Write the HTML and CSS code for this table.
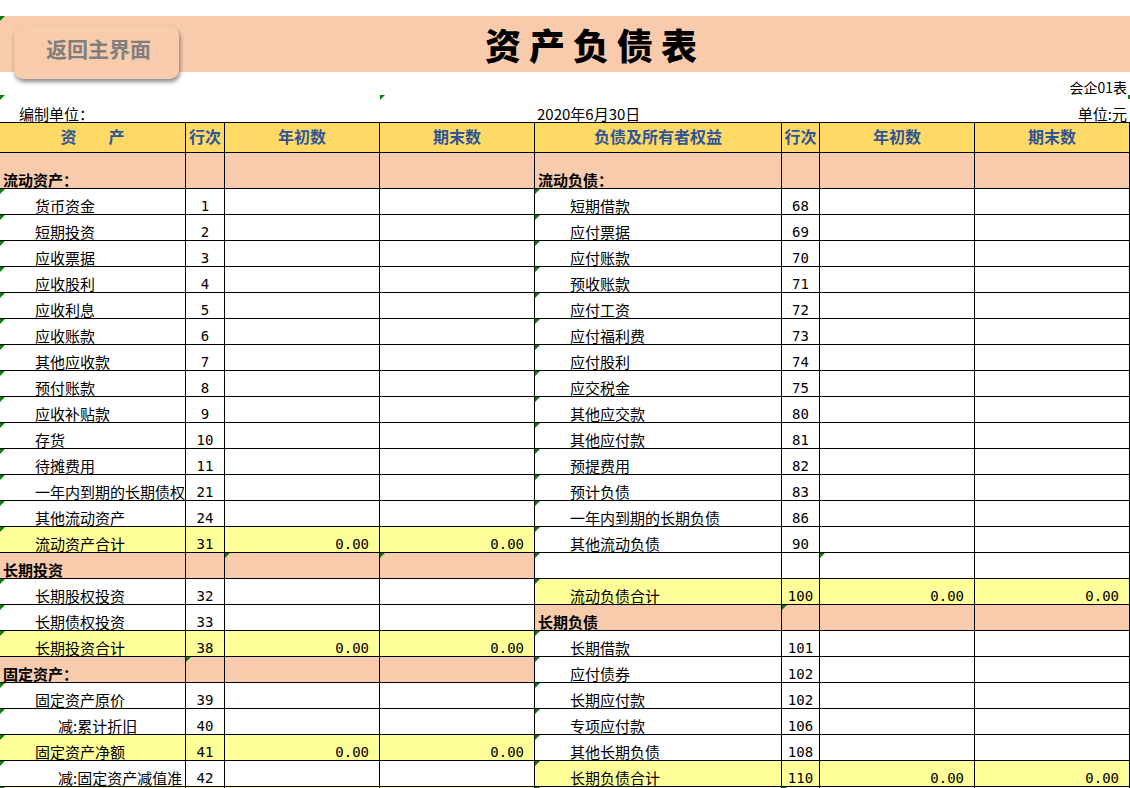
FILE: index.html
```html
<!DOCTYPE html>
<html lang="zh-CN">
<head>
<meta charset="utf-8">
<title>资产负债表</title>
<link rel="stylesheet" href="styles.css">
</head>
<body>
<div class="page">
  <div class="band g">
    <div class="btn">返回主界面</div>
    <h1 class="title">资产负债表</h1>
  </div>
  <div class="meta1">会企01表</div>
  <div class="meta2">
    <div class="m-left g">编制单位：</div>
    <div class="m-date g">2020年6月30日</div>
    <div class="m-right">单位:元</div>
  </div>
  <div class="sheet">
    <div class="c h">资　　产</div><div class="c h">行次</div><div class="c h">年初数</div><div class="c h">期末数</div><div class="c h">负债及所有者权益</div><div class="c h">行次</div><div class="c h">年初数</div><div class="c h">期末数</div>

    <div class="c s sec">流动资产：</div><div class="c s"></div><div class="c s"></div><div class="c s"></div><div class="c s sec">流动负债：</div><div class="c s"></div><div class="c s"></div><div class="c s"></div>

    <div class="c it g">货币资金</div><div class="c n">1</div><div class="c"></div><div class="c"></div><div class="c it g">短期借款</div><div class="c n">68</div><div class="c"></div><div class="c"></div>
    <div class="c it g">短期投资</div><div class="c n">2</div><div class="c"></div><div class="c"></div><div class="c it g">应付票据</div><div class="c n">69</div><div class="c"></div><div class="c"></div>
    <div class="c it g">应收票据</div><div class="c n">3</div><div class="c"></div><div class="c"></div><div class="c it g">应付账款</div><div class="c n">70</div><div class="c"></div><div class="c"></div>
    <div class="c it g">应收股利</div><div class="c n">4</div><div class="c"></div><div class="c"></div><div class="c it g">预收账款</div><div class="c n">71</div><div class="c"></div><div class="c"></div>
    <div class="c it g">应收利息</div><div class="c n">5</div><div class="c"></div><div class="c"></div><div class="c it g">应付工资</div><div class="c n">72</div><div class="c"></div><div class="c"></div>
    <div class="c it g">应收账款</div><div class="c n">6</div><div class="c"></div><div class="c"></div><div class="c it g">应付福利费</div><div class="c n">73</div><div class="c"></div><div class="c"></div>
    <div class="c it g">其他应收款</div><div class="c n">7</div><div class="c"></div><div class="c"></div><div class="c it g">应付股利</div><div class="c n">74</div><div class="c"></div><div class="c"></div>
    <div class="c it g">预付账款</div><div class="c n">8</div><div class="c"></div><div class="c"></div><div class="c it g">应交税金</div><div class="c n">75</div><div class="c"></div><div class="c"></div>
    <div class="c it g">应收补贴款</div><div class="c n">9</div><div class="c"></div><div class="c"></div><div class="c it g">其他应交款</div><div class="c n">80</div><div class="c"></div><div class="c"></div>
    <div class="c it g">存货</div><div class="c n">10</div><div class="c"></div><div class="c"></div><div class="c it g">其他应付款</div><div class="c n">81</div><div class="c"></div><div class="c"></div>
    <div class="c it g">待摊费用</div><div class="c n">11</div><div class="c"></div><div class="c"></div><div class="c it g">预提费用</div><div class="c n">82</div><div class="c"></div><div class="c"></div>
    <div class="c it g">一年内到期的长期债权</div><div class="c n">21</div><div class="c"></div><div class="c"></div><div class="c it g">预计负债</div><div class="c n">83</div><div class="c"></div><div class="c"></div>
    <div class="c it g">其他流动资产</div><div class="c n">24</div><div class="c"></div><div class="c"></div><div class="c it g">一年内到期的长期负债</div><div class="c n">86</div><div class="c"></div><div class="c"></div>

    <div class="c y it g">流动资产合计</div><div class="c y n">31</div><div class="c y v">0.00</div><div class="c y v">0.00</div><div class="c it g">其他流动负债</div><div class="c n">90</div><div class="c"></div><div class="c"></div>

    <div class="c s sec">长期投资</div><div class="c s"></div><div class="c s g"></div><div class="c s g"></div><div class="c g"></div><div class="c"></div><div class="c g"></div><div class="c"></div>

    <div class="c it g">长期股权投资</div><div class="c n">32</div><div class="c"></div><div class="c"></div><div class="c y it g">流动负债合计</div><div class="c y n">100</div><div class="c y v">0.00</div><div class="c y v">0.00</div>

    <div class="c it g">长期债权投资</div><div class="c n">33</div><div class="c"></div><div class="c"></div><div class="c s sec">长期负债</div><div class="c s g"></div><div class="c s"></div><div class="c s"></div>

    <div class="c y it g">长期投资合计</div><div class="c y n">38</div><div class="c y v">0.00</div><div class="c y v">0.00</div><div class="c it g">长期借款</div><div class="c n">101</div><div class="c"></div><div class="c"></div>

    <div class="c s sec">固定资产：</div><div class="c s g"></div><div class="c s"></div><div class="c s"></div><div class="c it g">应付债券</div><div class="c n">102</div><div class="c"></div><div class="c"></div>

    <div class="c it g">固定资产原价</div><div class="c n">39</div><div class="c"></div><div class="c"></div><div class="c it g">长期应付款</div><div class="c n">102</div><div class="c"></div><div class="c"></div>

    <div class="c it2 g">减:累计折旧</div><div class="c n">40</div><div class="c"></div><div class="c"></div><div class="c it g">专项应付款</div><div class="c n">106</div><div class="c"></div><div class="c"></div>

    <div class="c y it g">固定资产净额</div><div class="c y n">41</div><div class="c y v">0.00</div><div class="c y v">0.00</div><div class="c it g">其他长期负债</div><div class="c n">108</div><div class="c"></div><div class="c"></div>

    <div class="c it2 g">减:固定资产减值准</div><div class="c n">42</div><div class="c"></div><div class="c"></div><div class="c y it g">长期负债合计</div><div class="c y n">110</div><div class="c y v">0.00</div><div class="c y v">0.00</div>

    <div class="c y g"></div><div class="c y"></div><div class="c y"></div><div class="c y"></div><div class="c g"></div><div class="c g"></div><div class="c"></div><div class="c"></div>
  </div>
</div>
</body>
</html>
```

FILE: styles.css
```css
html, body {
  margin: 0;
  padding: 0;
  overflow: hidden;
  background: #fff;
}
body {
  font-family: "Noto Sans CJK SC", "Noto Sans", sans-serif;
  color: #000;
}
.page {
  width: 1130px;
  padding-top: 16px;
}

/* green excel error marks */
.g { position: relative; }
.g::before {
  content: "";
  position: absolute;
  left: 0;
  top: 0;
  width: 0;
  height: 0;
  border-top: 5px solid #0b7d0b;
  border-right: 5px solid transparent;
  z-index: 1;
}

.band {
  height: 56px;
  background: #f8cbad;
  display: flex;
  align-items: center;
}
.btn {
  position: absolute;
  left: 14px;
  top: 10px;
  width: 165px;
  height: 53px;
  box-sizing: border-box;
  padding-top: 12px;
  padding-left: 4px;
  background: #f8cbad;
  border-radius: 9px;
  box-shadow: 1px 3px 4px rgba(0, 0, 0, 0.45);
  color: #7f7f7f;
  font-size: 21px;
  font-weight: 700;
  line-height: 1;
  text-align: center;
  z-index: 2;
}
.title {
  margin: 0 0 0 485px;
  font-size: 36px;
  font-weight: 900;
  letter-spacing: 8px;
  line-height: 1;
}

.meta1 {
  height: 23px;
  display: flex;
  justify-content: flex-end;
  align-items: flex-end;
  padding-right: 3px;
  font-size: 14px;
  line-height: 1;
  box-sizing: border-box;
  padding-bottom: 1px;
}
.meta2 {
  height: 27px;
  display: grid;
  grid-template-columns: 380px 155px 247px 348px;
  font-size: 15px;
  line-height: 1;
}
.meta2 > div {
  display: flex;
  align-items: flex-end;
  padding-bottom: 1px;
  position: relative;
}
.m-left { padding-left: 19px; grid-column: 1; }
.m-date { grid-column: 2 / 4; padding-left: 157px; }
.m-right { grid-column: 4; justify-content: flex-end; padding-right: 3px; }
.m-right::before {
  content: "";
  position: absolute;
  right: 0;
  top: 0;
  width: 2px;
  height: 4px;
  background: #0b7d0b;
}

.sheet {
  display: grid;
  grid-template-columns: 186px 39px 155px 155px 247px 38px 155px 155px;
  grid-template-rows: 30px 36px repeat(24, 26px);
  border-top: 1px solid #000;
}
.c {
  box-sizing: border-box;
  border-right: 1px solid #000;
  border-bottom: 1px solid #000;
  display: flex;
  align-items: flex-end;
  font-size: 15px;
  line-height: 15px;
  white-space: nowrap;
  overflow: hidden;
  padding-bottom: 1px;
  position: relative;
}
.h {
  background: #ffd966;
  color: #2f5597;
  font-weight: 700;
  font-size: 16px;
  justify-content: center;
  align-items: center;
  padding-bottom: 2px;
}
.s { background: #f8cbad; }
.y { background: #ffff99; }
.sec { font-weight: 700; padding-left: 3px; }
.it { padding-left: 35px; }
.it2 { padding-left: 58px; }
.n {
  justify-content: center;
  font-family: "DejaVu Sans Mono", monospace;
  font-size: 14px;
  padding-bottom: 0;
}
.v {
  justify-content: flex-end;
  padding-right: 10px;
  font-family: "DejaVu Sans Mono", monospace;
  font-size: 14px;
  padding-bottom: 0;
}
```
